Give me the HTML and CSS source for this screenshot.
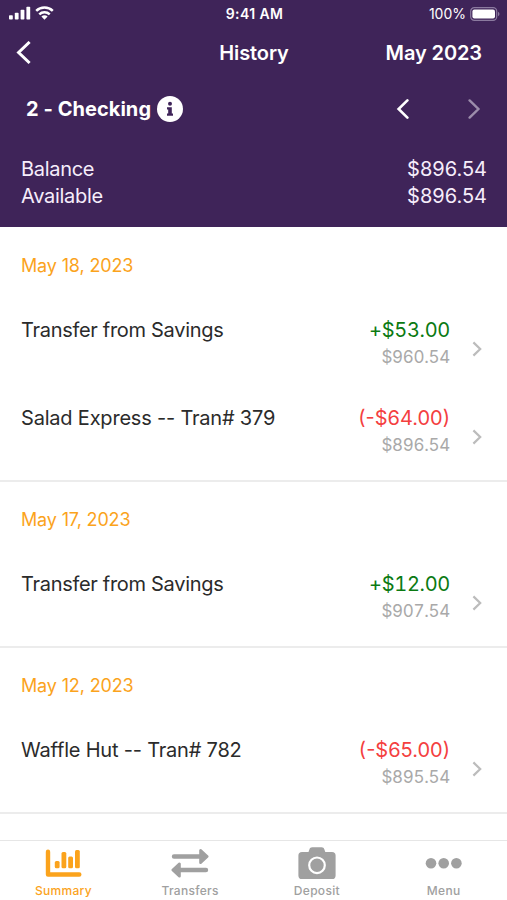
FILE: index.html
```html
<!DOCTYPE html>
<html lang="en">
<head>
    <meta charset="utf-8">
    <title>History</title>
    <link rel="stylesheet" href="styles.css">
</head>
<body>
    <div class="app">
        <header class="header">
            <div class="status-bar">
                <div class="signal">
                    <svg width="22" height="14" viewBox="0 0 22 14" fill="currentColor">
                        <rect x="0" y="9.2" width="3.8" height="4.3" rx="0.8"/>
                        <rect x="5.8" y="6.8" width="3.8" height="6.7" rx="0.8"/>
                        <rect x="11.6" y="3.8" width="3.8" height="9.7" rx="0.8"/>
                        <rect x="17.4" y="0.8" width="3.8" height="12.7" rx="0.8"/>
                    </svg>
                    <svg width="19" height="14" viewBox="0 0 19 14" fill="none" stroke="currentColor" stroke-width="2.5">
                        <path d="M1.2 4.9a11.8 11.8 0 0 1 16.6 0"/>
                        <path d="M4.3 8.3a7.4 7.4 0 0 1 10.4 0"/>
                        <path d="M9.5 13.7l-3.1-3.2a4.3 4.3 0 0 1 6.2 0z" fill="currentColor" stroke="none"/>
                    </svg>
                </div>
                <span class="time">9:41 AM</span>
                <div class="battery">
                    <span>100%</span>
                    <svg width="30" height="14" viewBox="0 0 30 14">
                        <rect x="0.7" y="0.7" width="26" height="12.6" rx="3.6" fill="none" stroke="#8b7a9f" stroke-width="1.2"/>
                        <rect x="2.4" y="2.5" width="22.6" height="9" rx="2" fill="#fff"/>
                        <path d="M28 4.8c2 .8 2 3.6 0 4.4z" fill="#8b7a9f"/>
                    </svg>
                </div>
            </div>
            <div class="nav">
                <svg width="16" height="24" viewBox="0 0 16 24" fill="none" stroke="currentColor" stroke-width="3">
                    <path d="M13.6 1L2.6 11.5l11 10.5"/>
                </svg>
                <h1 class="title">History</h1>
                <span class="month">May 2023</span>
            </div>
            <div class="account">
                <h2 class="account-name">2 - Checking</h2>
                <svg class="info" width="26" height="26" viewBox="0 0 26 26">
                    <circle cx="13" cy="13" r="13" fill="#fff"/>
                    <g fill="#3f2459">
                        <circle cx="13" cy="7.8" r="2"/>
                        <path d="M10 11.2h4.8v6.2H16v2.4h-6v-2.4h1.2v-3.8H10z"/>
                    </g>
                </svg>
                <svg class="prev" width="14" height="20" viewBox="0 0 14 20" fill="none" stroke="currentColor" stroke-width="2.6" stroke-linecap="round">
                    <path d="M11.4 1.4L2.6 10l8.8 8.6"/>
                </svg>
                <svg class="next" width="14" height="20" viewBox="0 0 14 20" fill="none" stroke="currentColor" stroke-width="2.4" stroke-linecap="round">
                    <path d="M2.6 1.4l8.8 8.6-8.8 8.6"/>
                </svg>
            </div>
            <div class="balances">
                <div class="balance-line"><span>Balance</span><span class="total">$896.54</span></div>
                <div class="balance-line"><span>Available</span><span class="total">$896.54</span></div>
            </div>
        </header>

        <main class="history">
            <section class="day">
                <h3 class="date">May 18, 2023</h3>
                <div class="row">
                    <span class="name transfer">Transfer from Savings</span>
                    <div class="amounts">
                        <span class="amount credit">+$53.00</span>
                        <span class="running">$960.54</span>
                    </div>
                    <svg class="chevron" width="10" height="16" viewBox="0 0 10 16"><path d="M1.4 1.4L8.2 8l-6.8 6.6"/></svg>
                </div>
                <div class="row">
                    <span class="name">Salad Express -- Tran# 379</span>
                    <div class="amounts">
                        <span class="amount debit">(-$64.00)</span>
                        <span class="running">$896.54</span>
                    </div>
                    <svg class="chevron" width="10" height="16" viewBox="0 0 10 16"><path d="M1.4 1.4L8.2 8l-6.8 6.6"/></svg>
                </div>
            </section>
            <section class="day">
                <h3 class="date">May 17, 2023</h3>
                <div class="row">
                    <span class="name transfer">Transfer from Savings</span>
                    <div class="amounts">
                        <span class="amount credit">+$12.00</span>
                        <span class="running">$907.54</span>
                    </div>
                    <svg class="chevron" width="10" height="16" viewBox="0 0 10 16"><path d="M1.4 1.4L8.2 8l-6.8 6.6"/></svg>
                </div>
            </section>
            <section class="day">
                <h3 class="date">May 12, 2023</h3>
                <div class="row">
                    <span class="name">Waffle Hut -- Tran# 782</span>
                    <div class="amounts">
                        <span class="amount debit">(-$65.00)</span>
                        <span class="running">$895.54</span>
                    </div>
                    <svg class="chevron" width="10" height="16" viewBox="0 0 10 16"><path d="M1.4 1.4L8.2 8l-6.8 6.6"/></svg>
                </div>
            </section>
        </main>

        <nav class="tabs">
            <div class="tab active">
                <svg width="38" height="34" viewBox="0 0 38 34" fill="currentColor">
                    <path d="M4 4.7v22.8h31.3" fill="none" stroke="currentColor" stroke-width="4.4" stroke-linecap="round" stroke-linejoin="round"/>
                    <rect x="10.8" y="14" width="4.8" height="7.2" rx="1.5"/>
                    <rect x="17.5" y="5" width="4.8" height="16.2" rx="1.5"/>
                    <rect x="24.2" y="9.6" width="4.8" height="11.6" rx="1.5"/>
                    <rect x="31" y="3" width="4.8" height="18.2" rx="1.5"/>
                </svg>
                <span>Summary</span>
            </div>
            <div class="tab">
                <svg width="38" height="34" viewBox="0 0 38 34" fill="currentColor" stroke="currentColor" stroke-linecap="round" stroke-linejoin="round">
                    <path d="M3 9.5h27M35 23H8" stroke-width="4.4"/>
                    <path d="M29.5 3.3v12.4l6.7-6.2zM8.5 16.8v12.4L1.8 23z" stroke-width="2.6"/>
                </svg>
                <span>Transfers</span>
            </div>
            <div class="tab">
                <svg width="38" height="34" viewBox="0 0 38 34">
                    <path d="M4 5h6.5l.9-2.6C11.8 1 12.8.3 14.2.3h9.4c1.4 0 2.4.7 2.8 2.1l.9 2.6H34a3.6 3.6 0 0 1 3.6 3.6v19.8A3.6 3.6 0 0 1 34 32H4a3.6 3.6 0 0 1-3.6-3.6V8.6A3.6 3.6 0 0 1 4 5z" fill="currentColor"/>
                    <circle cx="19" cy="18.3" r="7.8" fill="none" stroke="#fff" stroke-width="2.2"/>
                </svg>
                <span>Deposit</span>
            </div>
            <div class="tab">
                <svg width="38" height="34" viewBox="0 0 38 34" fill="currentColor">
                    <circle cx="6" cy="16.3" r="5.3"/>
                    <circle cx="18.7" cy="16.3" r="5.3"/>
                    <circle cx="31.4" cy="16.3" r="5.3"/>
                </svg>
                <span>Menu</span>
            </div>
        </nav>
    </div>
</body>
</html>
```

FILE: styles.css
```css
* {
    box-sizing: border-box;
}
body {
    margin: 0;
    font-family: Inter, "Liberation Sans", sans-serif;
    color: #2b2b2b;
    background: #fff;
}
h1, h2, h3 {
    margin: 0;
}
svg {
    display: block;
    flex-shrink: 0;
}
.app {
    display: flex;
    flex-direction: column;
    height: 900px;
    overflow: hidden;
}

/* header */
.header {
    height: 227px;
    flex-shrink: 0;
    background: #3f2459;
    color: #fff;
}
.status-bar {
    display: grid;
    grid-template-columns: 1fr auto 1fr;
    align-items: center;
    height: 27px;
    padding: 0 7px 0 9px;
    font-size: 14px;
}
.signal {
    display: flex;
    gap: 4px;
    padding-bottom: 1px;
}
.time {
    font-weight: 600;
    font-size: 14px;
    letter-spacing: 0.4px;
}
.battery {
    display: flex;
    justify-content: flex-end;
    align-items: center;
    gap: 4px;
}
.nav {
    display: grid;
    grid-template-columns: 1fr auto 1fr;
    align-items: center;
    height: 51px;
    padding: 0 25px 0 16px;
}
.title, .month {
    font-size: 20px;
    font-weight: 600;
    letter-spacing: -0.1px;
}
.title {
    padding-left: 10px;
}
.month {
    text-align: right;
}
.account {
    display: flex;
    align-items: center;
    height: 61px;
    padding: 0 26px;
}
.account-name {
    font-size: 20px;
    font-weight: 700;
    letter-spacing: 0.05px;
}
.info {
    margin-left: 6px;
}
.prev {
    margin-left: auto;
}
.next {
    margin-left: 57px;
    color: #9c8dab;
}
.balances {
    padding: 17px 20px 0 21px;
    font-size: 20px;
    line-height: 27px;
    color: #f6edfb;
}
.balance-line {
    display: flex;
    justify-content: space-between;
    letter-spacing: -0.3px;
}
.total {
    letter-spacing: 0;
}

/* transactions */
.history {
    flex: 1;
    min-height: 0;
    padding-top: 1px;
}
.day {
    border-bottom: 2px solid #ececec;
}
.date {
    height: 76px;
    padding-left: 21px;
    font-size: 18px;
    font-weight: 400;
    line-height: 76px;
    letter-spacing: -0.15px;
    color: #fba31c;
}
.row {
    display: flex;
    height: 88px;
    padding: 14px 25px 0 21px;
    line-height: 24px;
}
.name {
    flex: 1;
    font-size: 20px;
    letter-spacing: -0.2px;
}
.transfer {
    letter-spacing: -0.3px;
}
.amounts {
    display: flex;
    flex-direction: column;
    align-items: flex-end;
    gap: 3px;
}
.amount {
    font-size: 20px;
}
.credit {
    font-variant-numeric: tabular-nums;
    letter-spacing: -0.3px;
    color: #0b7a12;
}
.debit {
    color: #f4403f;
}
.running {
    font-size: 17px;
    font-variant-numeric: tabular-nums;
    letter-spacing: -0.3px;
    color: #a9a9a9;
}
.chevron {
    margin: 23px 0 0 22px;
    fill: none;
    stroke: #bcbcbc;
    stroke-width: 2.2;
}

/* bottom tabs */
.tabs {
    display: flex;
    flex-shrink: 0;
    height: 60px;
    border-top: 1px solid #e6e6e6;
    background: #fff;
}
.tab {
    flex: 1;
    display: flex;
    flex-direction: column;
    align-items: center;
    padding-top: 6px;
    font-size: 12px;
    font-weight: 500;
    line-height: 16px;
    letter-spacing: 0.3px;
    color: #a0a0a0;
}
.tab span {
    margin-top: 2px;
}
.tab.active {
    color: #fba31c;
}
```
